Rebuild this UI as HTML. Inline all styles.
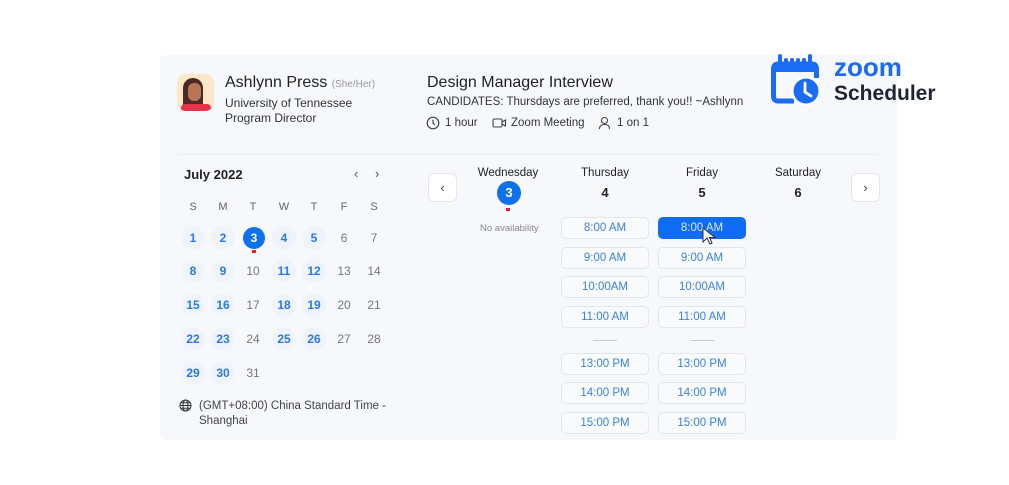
<!DOCTYPE html>
<html><head><meta charset="utf-8"><style>
*{margin:0;padding:0;box-sizing:border-box}
body{width:1009px;height:485px;background:#fff;position:relative;overflow:hidden;font-family:"Liberation Sans",sans-serif;color:#222}
.a{position:absolute;white-space:nowrap}
.card{position:absolute;left:160px;top:55px;width:737px;height:385px;background:#f6f8fb;border-radius:6px}
.d{position:absolute;width:24px;height:24px;line-height:24px;text-align:center;font-size:12px;margin-left:-12px;margin-top:-12px}
.b{color:#2a78e4;font-weight:bold;background:#eff4fc;border-radius:50%}
.g{color:#777}
.h{color:#666;font-size:11px}
.s{position:absolute;width:88px;height:22px;margin-left:-44px;margin-top:-11px;border:1px solid #e2e6ec;border-radius:5px;background:#f8fafc;color:#3a82e3;font-size:11.5px;text-align:center;line-height:20px}
.dn{position:absolute;text-align:center;width:100px;margin-left:-50px;font-size:11.5px;color:#222}
.dd{position:absolute;text-align:center;width:40px;margin-left:-20px;font-size:13px;font-weight:bold;color:#222}
.nb{position:absolute;width:29px;height:29px;border:1px solid #e3e6ea;border-radius:6px;background:#fff;text-align:center;line-height:27px;color:#444;font-size:13px}
</style></head><body>
<div class="card"></div>
<div class="a" style="left:177px;top:74px;width:37px;height:37px;border-radius:9px;background:#fbe8c8;overflow:hidden">
<div style="position:absolute;left:6px;top:4px;width:20px;height:30px;border-radius:10px 10px 2px 2px;background:#4a2a22"></div>
<div style="position:absolute;left:11px;top:9px;width:13px;height:18px;border-radius:6px;background:#b8755a"></div>
<div style="position:absolute;left:4px;top:30px;width:30px;height:8px;background:#e8344a;border-radius:4px 4px 0 0"></div>
</div>
<div class="a" style="left:225px;top:74px;font-size:16px;color:#222">Ashlynn Press <span style="font-size:10px;color:#999">(She/Her)</span></div>
<div class="a" style="left:225px;top:96px;font-size:12px;color:#333">University of Tennessee</div>
<div class="a" style="left:225px;top:111px;font-size:12px;color:#333">Program Director</div>
<div class="a" style="left:427px;top:74px;font-size:16px;color:#222">Design Manager Interview</div>
<div class="a" style="left:427px;top:96px;font-size:11.5px;color:#333">CANDIDATES: Thursdays are preferred, thank you!! ~Ashlynn</div>
<svg class="a" style="left:426px;top:116px" width="14" height="14" viewBox="0 0 14 14"><circle cx="7" cy="7" r="5.8" fill="none" stroke="#444" stroke-width="1.2"/><path d="M7 3.8V7.2L9 8.8" fill="none" stroke="#444" stroke-width="1.2"/></svg>
<div class="a" style="left:445px;top:117px;font-size:11.5px;color:#333">1 hour</div>
<svg class="a" style="left:492px;top:117px" width="15" height="12" viewBox="0 0 15 12"><rect x="1" y="2" width="9" height="8" rx="1.5" fill="none" stroke="#444" stroke-width="1.1"/><path d="M10 5L13.5 3V9L10 7" fill="none" stroke="#444" stroke-width="1.1"/></svg>
<div class="a" style="left:511px;top:117px;font-size:11.5px;color:#333">Zoom Meeting</div>
<svg class="a" style="left:598px;top:116px" width="13" height="14" viewBox="0 0 13 14"><circle cx="6.5" cy="4.5" r="3" fill="none" stroke="#444" stroke-width="1.1"/><path d="M1.5 13C1.5 9.5 3.5 8.5 6.5 8.5S11.5 9.5 11.5 13" fill="none" stroke="#444" stroke-width="1.1"/></svg>
<div class="a" style="left:617px;top:117px;font-size:11.5px;color:#333">1 on 1</div>
<div class="a" style="left:178px;top:154px;width:700px;height:1px;background:#ebedf0"></div>
<!-- logo -->
<svg class="a" style="left:770px;top:54px" width="52" height="52" viewBox="0 0 52 52">
<path d="M24 47H8Q3.5 47 3.5 42V15Q3.5 10 8 10H42Q46.5 10 46.5 15V24" fill="none" stroke="#1a6cf5" stroke-width="5"/>
<rect x="3.5" y="10" width="43" height="8" fill="#1a6cf5"/>
<path d="M10 2V12Q10 15 13 15Q16 15 16 12V6M22 6V12Q22 15 25 15Q28 15 28 12V6M34 6V12Q34 15 37 15Q40 15 40 12V2" fill="none" stroke="#1a6cf5" stroke-width="4" stroke-linecap="round"/>
<circle cx="36" cy="37" r="15" fill="#fff"/>
<circle cx="36" cy="37" r="12.5" fill="#1a6cf5"/>
<path d="M35 29V38L41 42" fill="none" stroke="#fff" stroke-width="2.8" stroke-linecap="round"/></svg>
<div class="a" style="left:834px;top:52px;font-size:26px;font-weight:bold;color:#1a6cf5;line-height:30px">zoom</div>
<div class="a" style="left:834px;top:81px;font-size:21px;font-weight:bold;color:#1f2533;line-height:26px">Scheduler</div>
<!-- calendar -->
<div class="a" style="left:184px;top:167px;font-size:13px;font-weight:bold;color:#222">July 2022</div>
<div class="a" style="left:354px;top:166px;font-size:13px;color:#555">‹</div>
<div class="a" style="left:375px;top:166px;font-size:13px;color:#555">›</div>
<div class="d h" style="left:193px;top:207px">S</div><div class="d h" style="left:223px;top:207px">M</div><div class="d h" style="left:253px;top:207px">T</div><div class="d h" style="left:284px;top:207px">W</div><div class="d h" style="left:314px;top:207px">T</div><div class="d h" style="left:344px;top:207px">F</div><div class="d h" style="left:374px;top:207px">S</div>
<div class="d b" style="left:193px;top:238px">1</div><div class="d b" style="left:223px;top:238px">2</div><div class="d" style="left:254px;top:238px;width:22px;height:22px;line-height:22px;margin-left:-11px;margin-top:-11px;background:#0e72ed;color:#fff;border-radius:50%;font-weight:bold">3</div><div class="d b" style="left:284px;top:238px">4</div><div class="d b" style="left:314px;top:238px">5</div><div class="d g" style="left:344px;top:238px">6</div><div class="d g" style="left:374px;top:238px">7</div>
<div class="a" style="left:252px;top:250px;width:4px;height:3px;background:#e8202a"></div>
<div class="d b" style="left:193px;top:271px">8</div><div class="d b" style="left:223px;top:271px">9</div><div class="d g" style="left:253px;top:271px">10</div><div class="d b" style="left:284px;top:271px">11</div><div class="d b" style="left:314px;top:271px">12</div><div class="d g" style="left:344px;top:271px">13</div><div class="d g" style="left:374px;top:271px">14</div>
<div class="d b" style="left:193px;top:305px">15</div><div class="d b" style="left:223px;top:305px">16</div><div class="d g" style="left:253px;top:305px">17</div><div class="d b" style="left:284px;top:305px">18</div><div class="d b" style="left:314px;top:305px">19</div><div class="d g" style="left:344px;top:305px">20</div><div class="d g" style="left:374px;top:305px">21</div>
<div class="d b" style="left:193px;top:339px">22</div><div class="d b" style="left:223px;top:339px">23</div><div class="d g" style="left:253px;top:339px">24</div><div class="d b" style="left:284px;top:339px">25</div><div class="d b" style="left:314px;top:339px">26</div><div class="d g" style="left:344px;top:339px">27</div><div class="d g" style="left:374px;top:339px">28</div>
<div class="d b" style="left:193px;top:373px">29</div><div class="d b" style="left:223px;top:373px">30</div><div class="d g" style="left:253px;top:373px">31</div>
<svg class="a" style="left:179px;top:399px" width="13" height="13" viewBox="0 0 13 13"><g fill="none" stroke="#333" stroke-width="1"><circle cx="6.5" cy="6.5" r="5.5"/><ellipse cx="6.5" cy="6.5" rx="2.5" ry="5.5"/><path d="M1 6.5H12M2 3.8H11M2 9.2H11"/></g></svg>
<div class="a" style="left:199px;top:399px;font-size:11.5px;color:#444;line-height:15px">(GMT+08:00) China Standard Time -<br>Shanghai</div>
<!-- week -->
<div class="nb" style="left:428px;top:173px">‹</div>
<div class="nb" style="left:851px;top:173px">›</div>
<div class="dn" style="left:508px;top:167px">Wednesday</div>
<div class="a" style="left:497px;top:181px;width:24px;height:24px;border-radius:50%;background:#0e72ed;color:#fff;font-weight:bold;font-size:13px;text-align:center;line-height:24px">3</div>
<div class="a" style="left:506px;top:208px;width:4px;height:3px;background:#e8202a"></div>
<div class="a" style="left:480px;top:223px;font-size:9.5px;color:#888">No availability</div>
<div class="dn" style="left:605px;top:167px">Thursday</div><div class="dd" style="left:605px;top:185px">4</div>
<div class="dn" style="left:702px;top:167px">Friday</div><div class="dd" style="left:702px;top:185px">5</div>
<div class="dn" style="left:798px;top:167px">Saturday</div><div class="dd" style="left:798px;top:185px">6</div>
<div class="s" style="left:605px;top:228px">8:00 AM</div>
<div class="s" style="left:702px;top:228px;background:#0e6cf5;color:#dbe8ff;border-color:#0e6cf5">8:00 AM</div>
<svg class="a" style="left:702px;top:227px" width="14" height="18" viewBox="0 0 14 18"><path d="M1 1V15L5 11L8 17L10 16L7.5 10.5H13Z" fill="#fff" stroke="#333" stroke-width="1"/></svg>
<div class="s" style="left:605px;top:258px">9:00 AM</div><div class="s" style="left:702px;top:258px">9:00 AM</div>
<div class="s" style="left:605px;top:287px">10:00AM</div><div class="s" style="left:702px;top:287px">10:00AM</div>
<div class="s" style="left:605px;top:317px">11:00 AM</div><div class="s" style="left:702px;top:317px">11:00 AM</div>
<div class="a" style="left:593px;top:340px;width:24px;height:1px;background:#c8ccd2"></div>
<div class="a" style="left:690px;top:340px;width:24px;height:1px;background:#c8ccd2"></div>
<div class="s" style="left:605px;top:364px">13:00 PM</div><div class="s" style="left:702px;top:364px">13:00 PM</div>
<div class="s" style="left:605px;top:393px">14:00 PM</div><div class="s" style="left:702px;top:393px">14:00 PM</div>
<div class="s" style="left:605px;top:423px">15:00 PM</div><div class="s" style="left:702px;top:423px">15:00 PM</div>
</body></html>
